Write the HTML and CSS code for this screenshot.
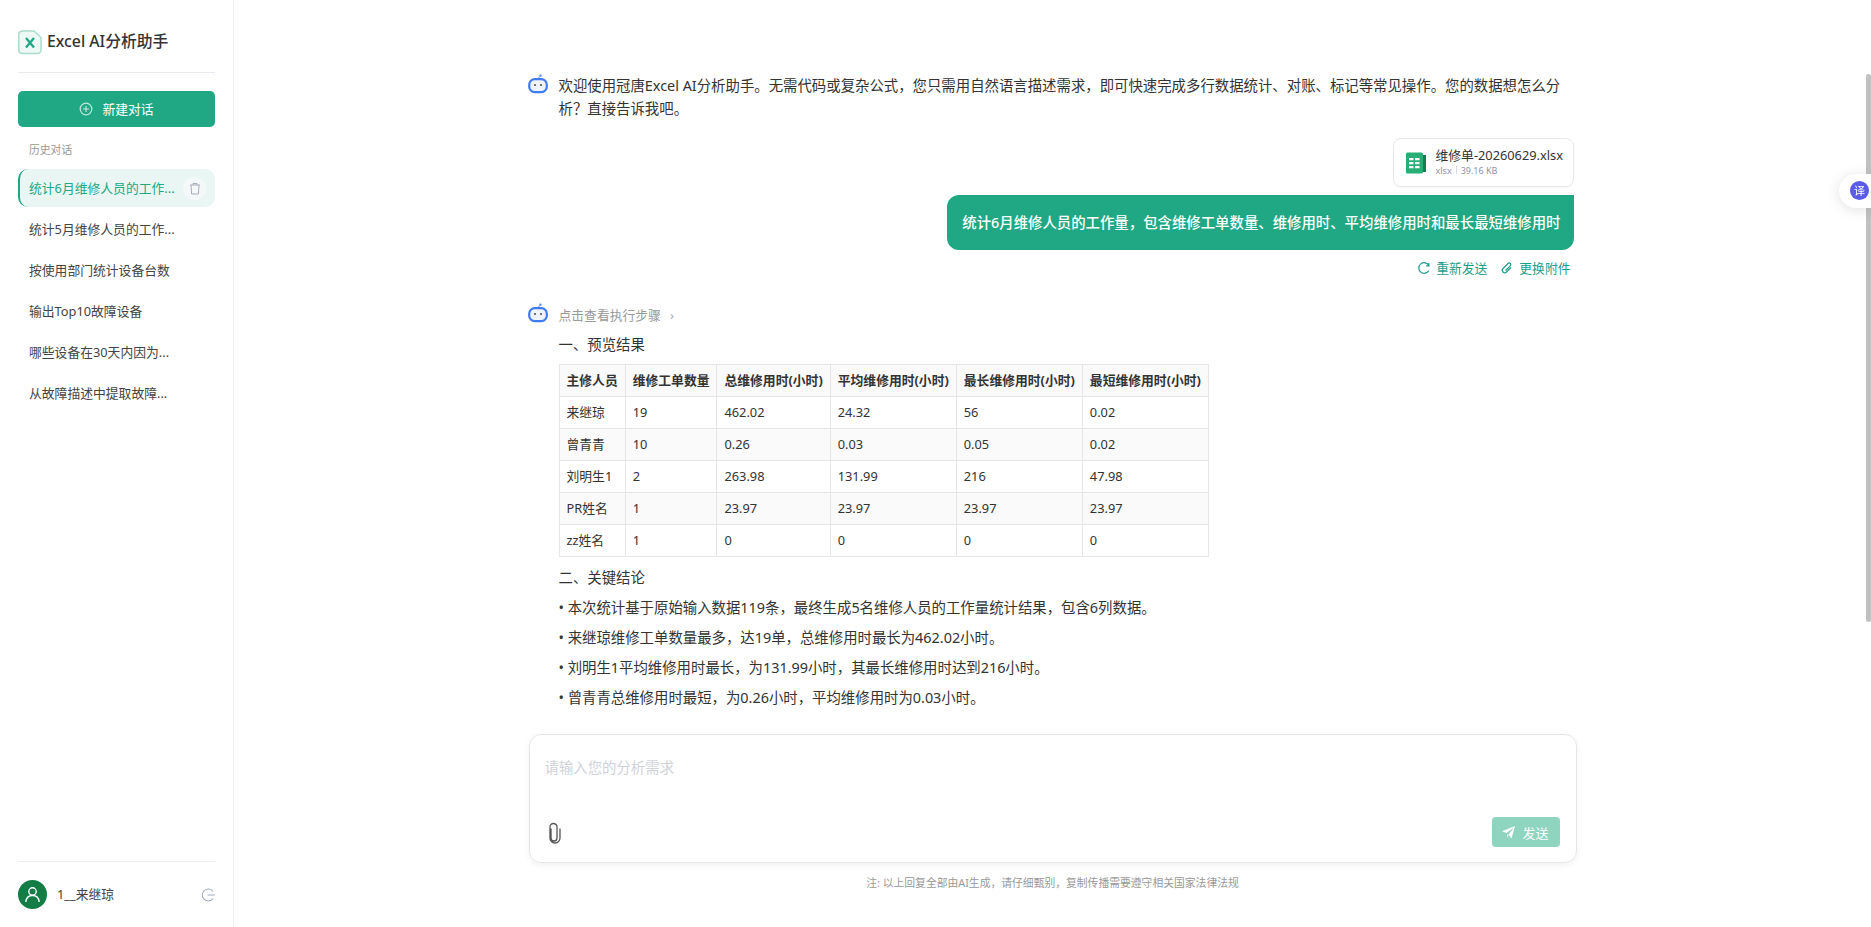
FILE: index.html
```html
<!DOCTYPE html>
<html lang="zh-CN">
<head>
    <meta charset="UTF-8">
    <meta name="viewport" content="width=device-width, initial-scale=1.0">
    <title>Excel AI分析助手</title>
    <link rel="stylesheet" href="styles.css">
</head>
<body>
    <div class="app">
        <aside class="sidebar">
            <div class="brand">
                <svg class="brand-icon" width="24" height="25" viewBox="0 0 24 25">
                    <path d="M4 1h12l7 6.500V20a3.500 3.500 0 0 1-3.500 3.500H4A3.500 3.500 0 0 1 .8 20V4.500A3.500 3.500 0 0 1 4 1z" fill="#eef8f5" stroke="#a9dccd" stroke-width="1.500"/>
                    <path d="M8 8l8 9.500M16 8l-8 9.500" stroke="#20a884" stroke-width="2.300" fill="none"/>
                </svg>
                <span class="brand-name">Excel AI分析助手</span>
            </div>
            <button class="new-chat">
                <svg width="14" height="14" viewBox="0 0 14 14" fill="none" stroke="#c2e8dc" stroke-width="1.200">
                    <circle cx="7" cy="7" r="5.800"/>
                    <path d="M7 4v6M4 7h6"/>
                </svg>
                <span>新建对话</span>
            </button>
            <div class="history-label">历史对话</div>
            <ul class="history">
                <li class="history-item active">
                    <span class="history-text">统计6月维修人员的工作...</span>
                    <span class="delete-btn">
                        <svg width="12" height="13" viewBox="0 0 12 13" fill="none" stroke="#a9adb8" stroke-width="1">
                            <path d="M1 3h10M4 3V1.500h4V3M2 3l.6 9h6.800L10 3"/>
                        </svg>
                    </span>
                </li>
                <li class="history-item"><span class="history-text">统计5月维修人员的工作...</span></li>
                <li class="history-item"><span class="history-text">按使用部门统计设备台数</span></li>
                <li class="history-item"><span class="history-text">输出Top10故障设备</span></li>
                <li class="history-item"><span class="history-text">哪些设备在30天内因为...</span></li>
                <li class="history-item"><span class="history-text">从故障描述中提取故障...</span></li>
            </ul>
            <div class="user-row">
                <span class="user-avatar">
                    <svg width="17" height="17" viewBox="0 0 17 17" fill="none" stroke="#fff" stroke-width="1.400">
                        <circle cx="8.500" cy="5.500" r="3.700"/>
                        <path d="M1.800 16c.4-4 3-6.500 6.700-6.500s6.300 2.500 6.700 6.500"/>
                    </svg>
                </span>
                <span class="user-name">1__来继琼</span>
                <svg class="logout" width="14" height="14" viewBox="0 0 14 14" fill="none" stroke="#a3adbd" stroke-width="1.100">
                    <path d="M12 3.300A6 6 0 1 0 12 10.700M6.500 7H14"/>
                </svg>
            </div>
        </aside>

        <main class="main">
            <div class="chat">
                <div class="bot-msg welcome">
                    <svg class="bot-icon" width="20" height="20" viewBox="0 0 20 20">
                        <circle cx="12.500" cy="1.700" r="1.100" fill="#3f7cf0"/>
                        <path d="M11.500 2.500L10 5" stroke="#3f7cf0" stroke-width="1"/>
                        <rect x="1.200" y="5.200" width="17.600" height="13" rx="5.500" fill="#eef3fe" stroke="#3f7cf0" stroke-width="2.200"/>
                        <circle cx="7" cy="11" r="1.100" fill="#555"/>
                        <circle cx="13" cy="11" r="1.100" fill="#555"/>
                    </svg>
                    <div class="msg-body">欢迎使用冠唐Excel AI分析助手。无需代码或复杂公式，您只需用自然语言描述需求，即可快速完成多行数据统计、对账、标记等常见操作。您的数据想怎么分析？直接告诉我吧。</div>
                </div>

                <div class="user-msg">
                    <div class="file-card">
                        <svg width="22" height="22" viewBox="0 0 22 22">
                            <rect x="15" y="3" width="6" height="17" fill="#12804f"/>
                            <rect x="1" y="0.500" width="17" height="21" rx="1.500" fill="#27ae74"/>
                            <path d="M4 6h4.500v2.300H4zM10 6h4.500v2.300H10zM4 10h4.500v2.300H4zM10 10h4.500v2.300H10zM4 14h4.500v2.300H4zM10 14h4.500v2.300H10z" fill="#fff"/>
                        </svg>
                        <div class="file-info">
                            <div class="file-name">维修单-20260629.xlsx</div>
                            <div class="file-meta">xlsx<i></i>39.16 KB</div>
                        </div>
                    </div>
                    <div class="bubble">统计6月维修人员的工作量，包含维修工单数量、维修用时、平均维修用时和最长最短维修用时</div>
                    <div class="msg-actions">
                        <span class="action">
                            <svg width="12" height="12" viewBox="0 0 12 12" fill="none" stroke="#1f9d8b" stroke-width="1.200"><path d="M10.800 3.500A5.300 5.300 0 1 0 10.800 8.500M10.900 1v2.800H8.100"/></svg>
                            重新发送
                        </span>
                        <span class="action">
                            <svg width="12" height="12" viewBox="0 0 12 12" fill="none" stroke="#1f9d8b" stroke-width="1.200"><path d="M10 5.500L5.500 10a2.400 2.400 0 0 1-3.500-3.500l5-5a1.600 1.600 0 0 1 2.300 2.300L4.600 8.500"/></svg>
                            更换附件
                        </span>
                    </div>
                </div>

                <div class="bot-msg answer">
                    <svg class="bot-icon" width="20" height="20" viewBox="0 0 20 20">
                        <circle cx="12.500" cy="1.700" r="1.100" fill="#3f7cf0"/>
                        <path d="M11.500 2.500L10 5" stroke="#3f7cf0" stroke-width="1"/>
                        <rect x="1.200" y="5.200" width="17.600" height="13" rx="5.500" fill="#eef3fe" stroke="#3f7cf0" stroke-width="2.200"/>
                        <circle cx="7" cy="11" r="1.100" fill="#555"/>
                        <circle cx="13" cy="11" r="1.100" fill="#555"/>
                    </svg>
                    <div class="msg-body">
                        <div class="steps">点击查看执行步骤<span class="chev">›</span></div>
                        <p class="section-title">一、预览结果</p>
                        <table class="result-table">
                            <thead>
                                <tr>
                                    <th>主修人员</th>
                                    <th>维修工单数量</th>
                                    <th>总维修用时(小时)</th>
                                    <th>平均维修用时(小时)</th>
                                    <th>最长维修用时(小时)</th>
                                    <th>最短维修用时(小时)</th>
                                </tr>
                            </thead>
                            <tbody>
                                <tr><td>来继琼</td><td>19</td><td>462.02</td><td>24.32</td><td>56</td><td>0.02</td></tr>
                                <tr><td>曾青青</td><td>10</td><td>0.26</td><td>0.03</td><td>0.05</td><td>0.02</td></tr>
                                <tr><td>刘明生1</td><td>2</td><td>263.98</td><td>131.99</td><td>216</td><td>47.98</td></tr>
                                <tr><td>PR姓名</td><td>1</td><td>23.97</td><td>23.97</td><td>23.97</td><td>23.97</td></tr>
                                <tr><td>zz姓名</td><td>1</td><td>0</td><td>0</td><td>0</td><td>0</td></tr>
                            </tbody>
                        </table>
                        <p class="section-title conclusion">二、关键结论</p>
                        <p class="point">• 本次统计基于原始输入数据119条，最终生成5名维修人员的工作量统计结果，包含6列数据。</p>
                        <p class="point">• 来继琼维修工单数量最多，达19单，总维修用时最长为462.02小时。</p>
                        <p class="point">• 刘明生1平均维修用时最长，为131.99小时，其最长维修用时达到216小时。</p>
                        <p class="point">• 曾青青总维修用时最短，为0.26小时，平均维修用时为0.03小时。</p>
                    </div>
                </div>
            </div>

            <div class="composer">
                <div class="placeholder">请输入您的分析需求</div>
                <div class="composer-bar">
                    <svg class="clip" width="17" height="22" viewBox="0 0 17 22" fill="none" stroke="#555" stroke-width="1.300">
                        <path d="M5.500 6v9.500a3 3 0 0 0 6 0V4.500a3.500 3.500 0 0 0-7 0v11a5 5 0 0 0 10 0V6" transform="translate(-0.500 0.500)"/>
                    </svg>
                    <button class="send-btn">
                        <svg width="13" height="13" viewBox="0 0 13 13" fill="#fff"><path d="M13 0L9.500 12.500 6.500 8.500 12 1.500 4.500 7 0 5.200z"/><path d="M5 8l1.500 1.500-1.500 2z"/></svg>
                        发送
                    </button>
                </div>
            </div>
            <div class="disclaimer">注: 以上回复全部由AI生成，请仔细甄别，复制传播需要遵守相关国家法律法规</div>
        </main>
    </div>

    <div class="scroll-thumb"></div>
    <div class="translate-tab">
        <span class="translate-icon">译</span>
    </div>
</body>
</html>
```

FILE: styles.css
```css
* {
    margin: 0;
    padding: 0;
    box-sizing: border-box;
}

html, body {
    height: 100%;
    overflow: hidden;
}

body {
    background: #fff;
    color: #333;
    font-family: "Noto Sans", "Noto Sans CJK SC", sans-serif;
    font-size: 14.4px;
}

.app {
    display: flex;
    height: 927px;
}

/* sidebar */
.sidebar {
    width: 234px;
    flex-shrink: 0;
    display: flex;
    flex-direction: column;
    padding: 0 18px;
    border-right: 1px solid #f0f0f2;
}

.brand {
    height: 73px;
    padding-top: 30px;
    display: flex;
    align-items: flex-start;
    gap: 5px;
    border-bottom: 1px solid #e9e9f0;
}

.brand-name {
    font-size: 15.8px;
    font-weight: 500;
    line-height: 23px;
    color: #333;
}

.new-chat {
    margin-top: 18px;
    height: 36px;
    width: 197px;
    padding-bottom: 1px;
    border: none;
    border-radius: 5px;
    background: #20a884;
    color: #fff;
    font-family: inherit;
    font-size: 12.8px;
    display: flex;
    align-items: center;
    justify-content: center;
    gap: 9px;
}

.history-label {
    margin-top: 15px;
    padding-left: 11px;
    font-size: 10.8px;
    line-height: 16px;
    color: #999;
}

.history {
    list-style: none;
    margin-top: 11px;
    flex: 1;
}

.history-item {
    height: 38px;
    margin-bottom: 3px;
    padding: 0 0 2px 11px;
    display: flex;
    align-items: center;
    justify-content: space-between;
    border-radius: 10px;
    font-size: 12.8px;
    color: #444;
}

.history-item.active {
    background: #e9f6f3;
    color: #20a884;
    border-left: 2px solid #20a884;
    padding: 0 9px;
}

.history-item.active .history-text {
    padding-bottom: 2px;
}

.delete-btn {
    width: 23px;
    height: 23px;
    border-radius: 50%;
    background: #f5f8f9;
    display: flex;
    align-items: center;
    justify-content: center;
}

.user-row {
    height: 66px;
    border-top: 1px solid #eeeeee;
    display: flex;
    align-items: center;
    gap: 10px;
}

.user-avatar {
    width: 29px;
    height: 29px;
    border-radius: 50%;
    background: #137d45;
    display: flex;
    align-items: center;
    justify-content: center;
}

.user-name {
    flex: 1;
    padding-bottom: 2px;
    font-size: 12.8px;
    color: #444;
}

/* main column */
.main {
    flex: 1;
    display: flex;
    flex-direction: column;
    align-items: center;
}

.chat {
    width: 1048px;
    padding-top: 74px;
    height: 734px;
}

.bot-msg {
    display: flex;
    gap: 11px;
}

.bot-icon {
    flex-shrink: 0;
    margin-left: -1px;
}

.msg-body {
    flex: 1;
    line-height: 23px;
    color: #333;
}

.welcome {
    padding-right: 10px;
}

.user-msg {
    margin-top: 18px;
    display: flex;
    flex-direction: column;
    align-items: flex-end;
}

.file-card {
    width: 181px;
    height: 49px;
    margin-right: 3px;
    padding: 0 0 0 11px;
    display: flex;
    align-items: center;
    gap: 9px;
    border: 1px solid #e8e8ec;
    border-radius: 8px;
    box-shadow: 0 1px 2px rgba(0, 0, 0, 0.04);
}

.file-name {
    font-size: 12.8px;
    line-height: 17px;
    color: #333;
}

.file-meta {
    font-size: 9px;
    line-height: 14px;
    color: #8f94a6;
}

.file-meta i {
    display: inline-block;
    width: 1px;
    height: 8px;
    margin: 0 4px;
    background: #d8d8de;
}

.bubble {
    margin-top: 8px;
    margin-right: 3px;
    height: 55px;
    padding: 0 13px 2px 15px;
    display: flex;
    align-items: center;
    background: #20a884;
    color: #fff;
    font-size: 14.4px;
    font-weight: 500;
    border-radius: 12px 0 12px 12px;
}

.msg-actions {
    margin-top: 9px;
    margin-right: 6px;
    display: flex;
    gap: 14px;
    height: 18px;
    font-size: 12.8px;
    line-height: 18px;
    color: #1f9d8b;
}

.action {
    display: flex;
    align-items: center;
    gap: 6px;
}

.answer {
    margin-top: 26px;
}

.steps {
    font-size: 12.8px;
    line-height: 24px;
    color: #999;
}

.chev {
    margin-left: 9px;
    color: #aaa;
}

.section-title {
    margin-top: 6px;
    line-height: 24px;
}

.result-table {
    margin-top: 7px;
    border-collapse: collapse;
    font-size: 12.8px;
    line-height: 18px;
}

.result-table th,
.result-table td {
    height: 32px;
    padding: 0 7px 1px;
    border: 1px solid #e6e6e6;
    text-align: left;
    white-space: nowrap;
}

.result-table th {
    font-weight: 700;
    background: #fafafa;
}

.result-table tbody tr:nth-child(even) {
    background: #fafafa;
}

.conclusion {
    margin-top: 9px;
}

.point {
    margin-top: 6px;
    line-height: 24px;
}

/* input box */
.composer {
    width: 1048px;
    height: 129px;
    padding: 21px 16px 15px 15px;
    display: flex;
    flex-direction: column;
    justify-content: space-between;
    border: 1px solid #e6e6e6;
    border-radius: 12px;
    box-shadow: 0 2px 6px rgba(0, 0, 0, 0.06);
}

.placeholder {
    font-size: 14.4px;
    line-height: 24px;
    color: #cfd2da;
}

.composer-bar {
    display: flex;
    align-items: center;
    justify-content: space-between;
}

.clip {
    margin: 2px 0 0 1px;
}

.send-btn {
    width: 68px;
    height: 30px;
    border: none;
    border-radius: 4px;
    background: #8fd4bf;
    color: #fff;
    font-family: inherit;
    font-size: 13px;
    display: flex;
    align-items: center;
    justify-content: center;
    gap: 7px;
}

.disclaimer {
    margin-top: 12px;
    font-size: 10.8px;
    line-height: 16px;
    color: #999;
}

/* browser overlays */
.scroll-thumb {
    position: fixed;
    top: 74px;
    right: 0;
    width: 5px;
    height: 548px;
    border-radius: 3px;
    background: #c1c1c1;
}

.translate-tab {
    position: fixed;
    top: 174px;
    right: 0;
    width: 32px;
    height: 34px;
    padding: 7px 0 0 11px;
    background: #fff;
    border-radius: 17px 0 0 17px;
    box-shadow: 0 2px 14px rgba(0, 0, 0, 0.12);
}

.translate-icon {
    display: block;
    width: 19px;
    height: 19px;
    border-radius: 50%;
    background: #5a5ce8;
    color: #fff;
    font-size: 11px;
    line-height: 19px;
    text-align: center;
}
```
